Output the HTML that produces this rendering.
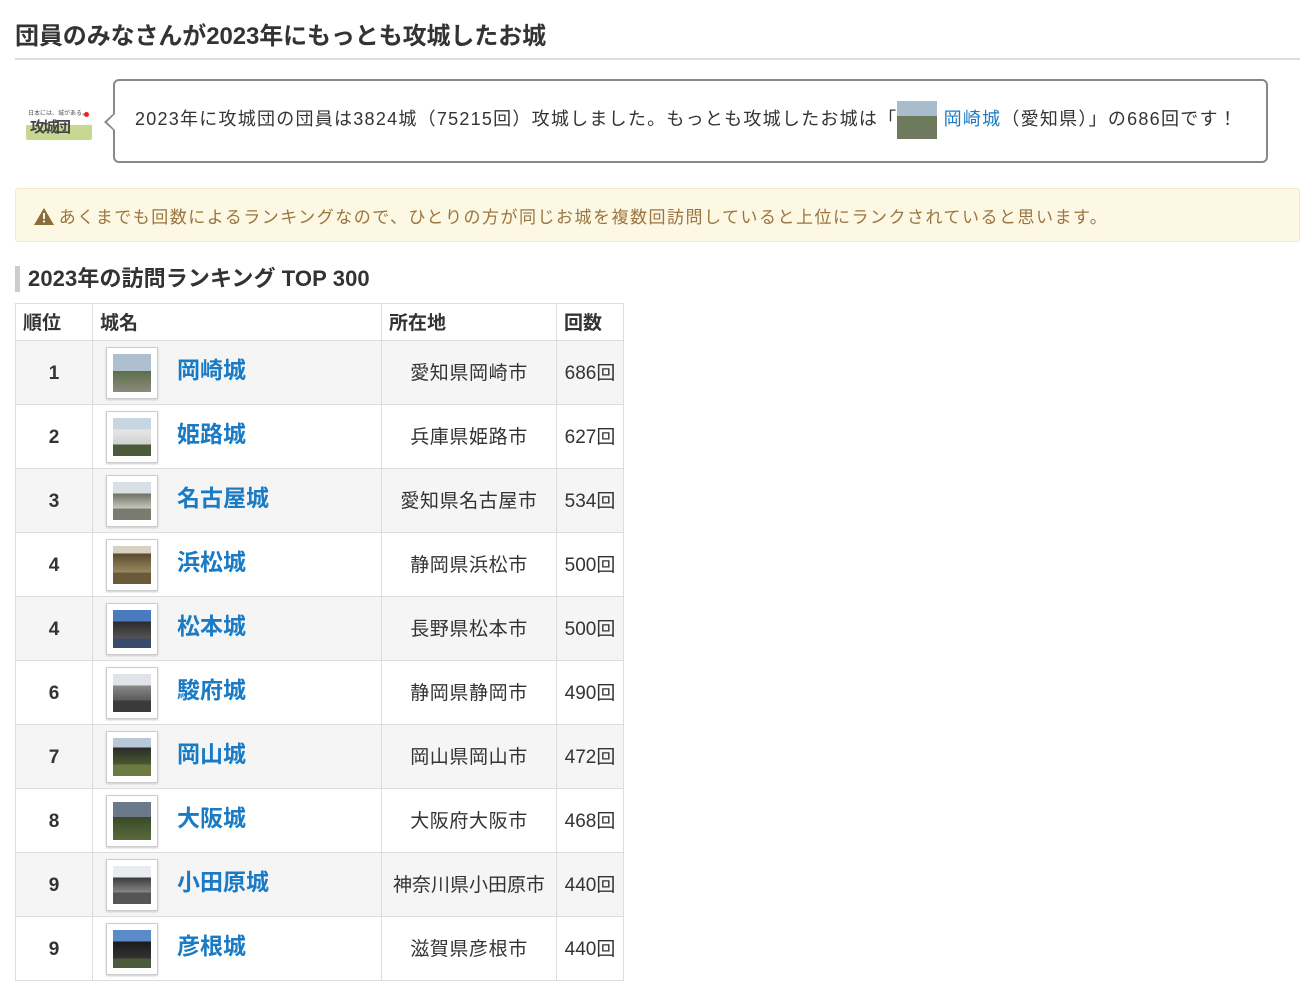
<!DOCTYPE html>
<html><head><meta charset="utf-8"><style>
body{margin:0;background:#fff;font-family:"Liberation Sans","Noto Sans CJK JP",sans-serif;color:#333;width:1300px;height:974px;overflow:hidden;position:relative}
.abs{position:absolute}
h1{position:absolute;left:15px;top:16px;margin:0;font-size:24px;font-weight:bold;color:#333;letter-spacing:-0.1px}
.hr{left:15px;top:58px;width:1285px;height:2px;background:#ddd}
.bubble{left:113px;top:79px;width:1155px;height:84px;border:2px solid #888;border-radius:6px;box-sizing:border-box}
.bubble span{position:absolute;left:20px;top:20px;font-size:18px;white-space:nowrap;color:#333;letter-spacing:1.25px}
.bubble a{color:#1a7bc4;text-decoration:none}
.alert{left:15px;top:188px;width:1285px;height:54px;background:#fcf8e3;border:1px solid #f5e8c8;box-sizing:border-box;border-radius:3px;color:#9a7540;font-size:17px}
h2{position:absolute;left:15px;top:266px;margin:0;font-size:22px;font-weight:bold;border-left:5px solid #ccc;padding-left:8px;line-height:26px;letter-spacing:0.1px}
table{position:absolute;left:15px;top:303px;border-collapse:collapse;border:1px solid #ddd}
td,th{border:1px solid #ddd;padding:0}
th{height:34px;text-align:left;font-size:19px;font-weight:bold;padding-left:7px;background:#fff;padding-bottom:2px}
td{height:60px;padding-bottom:3px}
td.rk{padding:3px 0 0}
tr:nth-child(even) td{background:#f5f5f5}
.rk{width:76px;text-align:center;font-weight:bold;font-size:19px}
.nm{width:288px;position:relative}
.th{position:absolute;left:13px;top:6px;width:50px;height:50px;border:1px solid #ccc;background:#fff;box-shadow:0 1px 2px #ccc}
.th i{position:absolute;left:6px;top:6px;width:38px;height:38px}
.nm a{position:absolute;left:84px;top:10px;font-size:23px;font-weight:bold;color:#1a7bc4;text-decoration:none}
.lc{width:174px;text-align:center;font-size:19px;letter-spacing:0.6px}
.ct{width:66px;text-align:center;font-size:19px}
</style></head><body>
<h1>団員のみなさんが2023年にもっとも攻城したお城</h1>
<div class="abs hr"></div>
<div class="abs" style="left:26px;top:102px;width:66px;height:38px;background:linear-gradient(#fff 60%,#c8d890 60%);border-radius:2px">
<div class="abs" style="left:2px;top:6px;font-size:6px;color:#555;white-space:nowrap">日本には、城がある。</div>
<div class="abs" style="left:4px;top:14px;font-size:15px;font-weight:bold;color:#444;white-space:nowrap;letter-spacing:-2px">攻城団</div>
<div class="abs" style="left:58px;top:10px;width:5px;height:5px;border-radius:50%;background:#e22"></div></div>
<div class="abs bubble"><span>2023年に攻城団の団員は3824城（75215回）攻城しました。もっとも攻城したお城は「<i style="display:inline-block;width:40px;height:38px;vertical-align:middle;background:linear-gradient(#a9bccc 40%,#6b7a5a 40%,#707860)"></i> <a>岡崎城</a>（愛知県）」の686回です！</span></div>
<div class="abs" style="left:104px;top:112px;width:0;height:0;border-top:10px solid transparent;border-bottom:10px solid transparent;border-right:11px solid #888"></div>
<div class="abs" style="left:107px;top:113px;width:0;height:0;border-top:9px solid transparent;border-bottom:9px solid transparent;border-right:9px solid #fff"></div>
<div class="abs alert"><span style="position:absolute;left:18px;top:14px;white-space:nowrap"><svg width="20" height="17" viewBox="0 0 20 17" style="vertical-align:-2px"><path d="M10 0L20 17H0Z" fill="#8a6d3b"/><rect x="9" y="5" width="2" height="6" fill="#fcf8e3"/><rect x="9" y="12.5" width="2" height="2" fill="#fcf8e3"/></svg> <span style="letter-spacing:1.5px">あくまでも回数によるランキングなので、ひとりの方が同じお城を複数回訪問していると上位にランクされていると思います。</span></span></div>
<h2>2023年の訪問ランキング TOP 300</h2>
<table>
<tr><th>順位</th><th>城名</th><th>所在地</th><th>回数</th></tr>
<tr><td class="rk">1</td><td class="nm"><div class="th"><i style="background:linear-gradient(#aebfcf 45%,#5e6e4c 45%,#8a8a7a)"></i></div><a>岡崎城</a></td><td class="lc">愛知県岡崎市</td><td class="ct">686回</td></tr>
<tr><td class="rk">2</td><td class="nm"><div class="th"><i style="background:linear-gradient(#c8d6e2 30%,#e8e8e8 30%,#d0d0d0 70%,#4a5a3a 70%)"></i></div><a>姫路城</a></td><td class="lc">兵庫県姫路市</td><td class="ct">627回</td></tr>
<tr><td class="rk">3</td><td class="nm"><div class="th"><i style="background:linear-gradient(#d8e0e6 30%,#6a7060 30%,#c8c8c0 70%,#7a7a70 70%)"></i></div><a>名古屋城</a></td><td class="lc">愛知県名古屋市</td><td class="ct">534回</td></tr>
<tr><td class="rk">4</td><td class="nm"><div class="th"><i style="background:linear-gradient(#d8d0c0 20%,#5a4a30 20%,#9a8a60 70%,#6a5a3a 70%)"></i></div><a>浜松城</a></td><td class="lc">静岡県浜松市</td><td class="ct">500回</td></tr>
<tr><td class="rk">4</td><td class="nm"><div class="th"><i style="background:linear-gradient(#4a7ac0 30%,#2a2a2a 30%,#555 75%,#3a4a6a 75%)"></i></div><a>松本城</a></td><td class="lc">長野県松本市</td><td class="ct">500回</td></tr>
<tr><td class="rk">6</td><td class="nm"><div class="th"><i style="background:linear-gradient(#e0e4e8 30%,#8a8a88 30%,#5a5a58 70%,#3a3a3a 70%)"></i></div><a>駿府城</a></td><td class="lc">静岡県静岡市</td><td class="ct">490回</td></tr>
<tr><td class="rk">7</td><td class="nm"><div class="th"><i style="background:linear-gradient(#b8c8d8 25%,#2a2a2a 25%,#4a5a30 70%,#6a7a40 70%)"></i></div><a>岡山城</a></td><td class="lc">岡山県岡山市</td><td class="ct">472回</td></tr>
<tr><td class="rk">8</td><td class="nm"><div class="th"><i style="background:linear-gradient(#6a7a8a 40%,#3a4a2a 40%,#5a6a3a)"></i></div><a>大阪城</a></td><td class="lc">大阪府大阪市</td><td class="ct">468回</td></tr>
<tr><td class="rk">9</td><td class="nm"><div class="th"><i style="background:linear-gradient(#e8ecf0 30%,#3a3a3a 30%,#888 70%,#555 70%)"></i></div><a>小田原城</a></td><td class="lc" style="letter-spacing:0">神奈川県小田原市</td><td class="ct">440回</td></tr>
<tr><td class="rk">9</td><td class="nm"><div class="th"><i style="background:linear-gradient(#5a8ac8 30%,#1a1a1a 30%,#333 75%,#4a5a3a 75%)"></i></div><a>彦根城</a></td><td class="lc">滋賀県彦根市</td><td class="ct">440回</td></tr>
</table>
</body></html>
